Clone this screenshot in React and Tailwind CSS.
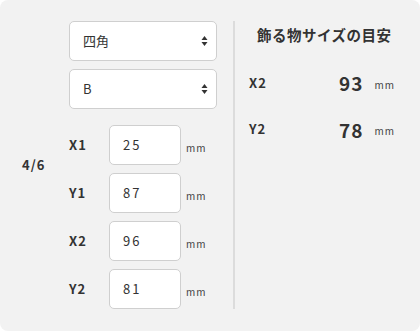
import React from 'react';

const font = { fontFamily: '"Noto Sans CJK JP", "Noto Sans", sans-serif' };

const Arrows = () => (
  <svg width="7" height="12" viewBox="0 0 7 12" className="text-[#333]">
    <path d="M3.5 1 L6.5 5 L0.5 5 Z" fill="currentColor" />
    <path d="M3.5 11 L6.5 7 L0.5 7 Z" fill="currentColor" />
  </svg>
);

const SelectBox = ({ value }) => (
  <div className="h-[40px] w-[148px] bg-white border border-[#cfcfcf] rounded-[5px] flex items-center justify-between pl-[13px] pr-[8px]">
    <span className="text-[13px] text-[#333]">{value}</span>
    <Arrows />
  </div>
);

const InputRow = ({ label, value }) => (
  <div className="flex items-center h-[40px]">
    <span className="w-[40px] text-[13px] font-bold text-[#333] tracking-[1px]">{label}</span>
    <div className="h-[40px] w-[72px] bg-white border border-[#cfcfcf] rounded-[5px] flex items-center pl-[13px]">
      <span className="text-[13px] text-[#333] tracking-[2px]">{value}</span>
    </div>
    <span className="ml-[5px] mt-[4px] text-[10px] text-[#444] tracking-[1px]">mm</span>
  </div>
);

const SizeRow = ({ label, value }) => (
  <div className="flex items-center">
    <span className="w-[90px] text-[13px] font-bold text-[#333] tracking-[1px]">{label}</span>
    <span className="text-[19px] font-bold text-[#333] tracking-[1px] leading-none">{value}</span>
    <span className="ml-[11px] mt-[3px] text-[10px] text-[#444] tracking-[1px]">mm</span>
  </div>
);

export default function App() {
  return (
    <div className="w-[420px] h-[331px] bg-white" style={font}>
      <div className="w-full h-full bg-[#f2f2f2] rounded-[8px] flex pt-[21px] pb-[22px]">
        <div className="flex items-center">
          <span className="ml-[22px] w-[47px] text-[13px] font-bold text-[#333] tracking-[1px]">4/6</span>
          <div className="flex flex-col">
            <div className="flex flex-col gap-[8px]">
              <SelectBox value="四角" />
              <SelectBox value="B" />
            </div>
            <div className="flex flex-col gap-[8px] mt-[16px]">
              <InputRow label="X1" value="25" />
              <InputRow label="Y1" value="87" />
              <InputRow label="X2" value="96" />
              <InputRow label="Y2" value="81" />
            </div>
          </div>
        </div>
        <div className="ml-[16px] w-[2px] bg-[#dcdcdc]" />
        <div className="pl-[14px] flex flex-col">
          <h2 className="ml-[8px] mt-[3px] text-[14.5px] font-bold text-[#333] tracking-[0.5px]">飾る物サイズの目安</h2>
          <div className="mt-[27px] flex flex-col gap-[27px]">
            <SizeRow label="X2" value="93" />
            <SizeRow label="Y2" value="78" />
          </div>
        </div>
      </div>
    </div>
  );
}
